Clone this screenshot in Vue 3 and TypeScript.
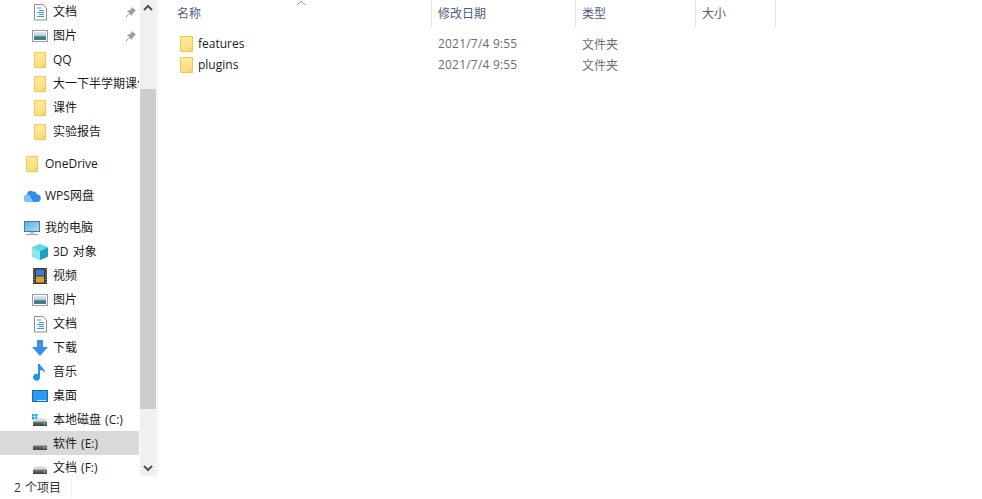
<script setup lang="ts">
type NavItem = { label: string; icon: string; indent: boolean; pin?: boolean; selected?: boolean };

const navGroups: NavItem[][] = [
  [
    { label: "文档", icon: "doc", indent: true, pin: true },
    { label: "图片", icon: "pic", indent: true, pin: true },
    { label: "QQ", icon: "folder", indent: true },
    { label: "大一下半学期课件", icon: "folder", indent: true },
    { label: "课件", icon: "folder", indent: true },
    { label: "实验报告", icon: "folder", indent: true },
  ],
  [{ label: "OneDrive", icon: "folder", indent: false }],
  [{ label: "WPS网盘", icon: "cloud", indent: false }],
  [
    { label: "我的电脑", icon: "pc", indent: false },
    { label: "3D 对象", icon: "cube", indent: true },
    { label: "视频", icon: "film", indent: true },
    { label: "图片", icon: "pic", indent: true },
    { label: "文档", icon: "doc", indent: true },
    { label: "下载", icon: "down", indent: true },
    { label: "音乐", icon: "music", indent: true },
    { label: "桌面", icon: "desk", indent: true },
    { label: "本地磁盘 (C:)", icon: "sys", indent: true },
    { label: "软件 (E:)", icon: "disk", indent: true, selected: true },
    { label: "文档 (F:)", icon: "disk", indent: true },
  ],
];

const columns = [
  { label: "名称", width: 274, sorted: true },
  { label: "修改日期", width: 144 },
  { label: "类型", width: 120 },
  { label: "大小", width: 80 },
];

const files = [
  { name: "features", date: "2021/7/4 9:55", type: "文件夹" },
  { name: "plugins", date: "2021/7/4 9:55", type: "文件夹" },
];
</script>

<template>
  <div class="window">
    <!-- shared gradients for the icons -->
    <svg class="defs" width="0" height="0">
      <defs>
        <linearGradient id="folderFill" x1="0" y1="0" x2="0" y2="1">
          <stop offset="0" stop-color="#fee99c" />
          <stop offset="1" stop-color="#fcdc7c" />
        </linearGradient>
        <linearGradient id="skyFill" x1="0" y1="0" x2="0" y2="1">
          <stop offset="0" stop-color="#e4eef5" />
          <stop offset="0.5" stop-color="#a9c6d8" />
          <stop offset="0.6" stop-color="#3f6f7c" />
          <stop offset="1" stop-color="#4b7f8d" />
        </linearGradient>
        <linearGradient id="screenFill" x1="0" y1="0" x2="1" y2="1">
          <stop offset="0" stop-color="#4fb4ea" />
          <stop offset="1" stop-color="#a6def7" />
        </linearGradient>
        <linearGradient id="driveFill" x1="0" y1="0" x2="0" y2="1">
          <stop offset="0" stop-color="#777b7e" />
          <stop offset="1" stop-color="#3f4245" />
        </linearGradient>
      </defs>
    </svg>

    <div class="main">
      <aside class="nav">
        <div class="nav-list">
          <div v-for="(group, g) in navGroups" :key="g" class="nav-group">
            <div
              v-for="item in group"
              :key="item.label + g"
              class="nav-row"
              :class="{ indent: item.indent, selected: item.selected }"
            >
              <svg class="nav-icon" viewBox="0 0 20 20">
                <template v-if="item.icon === 'folder'">
                  <path d="M2.500 3.500h11v15h-11z" fill="url(#folderFill)" stroke="#f0c94f" />
                  <path d="M11.500 18.500v-3h2" fill="none" stroke="#f0c94f" />
                </template>
                <template v-else-if="item.icon === 'doc'">
                  <path d="M2.500 3.500h8.500l3.500 3.500v12h-12z" fill="#fff" stroke="#8f8f8f" />
                  <path d="M5 7h4M7 9.500h5M5 11.500h7M7 13.500h5M5 15.500h7" stroke="#3b9bd9" fill="none" />
                </template>
                <template v-else-if="item.icon === 'pic'">
                  <rect x="0.500" y="5.500" width="15" height="11" fill="#fff" stroke="#9a9a9a" />
                  <rect x="2" y="7" width="12" height="8" fill="url(#skyFill)" />
                </template>
                <template v-else-if="item.icon === 'cloud'">
                  <path d="M0 14a3.500 3.500 0 0 1 3-4.500 3.500 3.500 0 0 1 5.500-3 4 4 0 0 1 4.500 3 3.500 3.500 0 0 1 0 7.500H3a3 3 0 0 1-3-3z" fill="#2f8fe8" />
                  <path d="M0 14a3.500 3.500 0 0 1 3-4.500c2 0 3 1 4 3l2 4.500H3a3 3 0 0 1-3-3z" fill="#7cc4f7" />
                </template>
                <template v-else-if="item.icon === 'pc'">
                  <rect x="0.500" y="4.500" width="15" height="10" fill="url(#screenFill)" stroke="#5f7382" />
                  <path d="M6 15h4v2H6z" fill="#c4ced6" />
                  <path d="M2 17.500h12" stroke="#8ea0ab" fill="none" />
                </template>
                <template v-else-if="item.icon === 'cube'">
                  <path d="M8 3l8 3.500v9L8 19l-8-3.500v-9z" fill="#3dc2d8" />
                  <path d="M0 6.500L8 10v9l-8-3.500z" fill="#8fe4ee" />
                  <path d="M8 10l8-3.500v9L8 19z" fill="#1c9fc0" />
                  <path d="M8 3l8 3.500L8 10 0 6.500z" fill="#62d5e6" />
                </template>
                <template v-else-if="item.icon === 'film'">
                  <rect x="1" y="3" width="14" height="16" fill="#3a3a3a" />
                  <path d="M2 4v14M14 4v14" stroke="#cfcfcf" stroke-dasharray="1 1.500" fill="none" />
                  <rect x="4" y="4.500" width="8" height="6" fill="#3f78d0" />
                  <rect x="4" y="11.500" width="8" height="6" fill="#d9a437" />
                </template>
                <template v-else-if="item.icon === 'down'">
                  <path d="M5 3h6v7h5l-8 9-8-9h5z" fill="#3b8fe0" />
                </template>
                <template v-else-if="item.icon === 'music'">
                  <path d="M6 3h2c0 3 5 4 5 9-1-2-3-3-5-3v7a3.500 3.500 0 1 1-2-3z" fill="#1f93e8" />
                </template>
                <template v-else-if="item.icon === 'desk'">
                  <rect x="0.500" y="5.500" width="15" height="11" fill="#2d9cf0" stroke="#0f6fbe" />
                  <path d="M5 15.500h9" stroke="#c7e6fb" />
                </template>
                <template v-else>
                  <path
                    v-if="item.icon === 'sys'"
                    d="M0 5h2.500v2.500H0zM3 5h2.500v2.500H3zM0 8h2.500v2.500H0zM3 8h2.500v2.500H3z"
                    fill="#1ea7ea"
                  />
                  <path d="M3 9.500h10l2 3H1z" fill="#d5d9dc" />
                  <rect x="1" y="12.500" width="14" height="4.500" fill="url(#driveFill)" />
                  <rect x="11.500" y="14" width="2" height="1.500" fill="#5fd06a" />
                </template>
              </svg>
              <span class="nav-label">{{ item.label }}</span>
              <svg v-if="item.pin" class="pin" viewBox="0 0 12 12">
                <path d="M7 1l4 4-1.500.5L7.500 8l-.5 2-5-5 2-.5 2.500-2z" fill="#9a9ea3" />
                <path d="M3.500 8.500L1 11" stroke="#9a9ea3" fill="none" />
              </svg>
            </div>
          </div>
        </div>
        <div class="scrollbar">
          <svg class="arrow" viewBox="0 0 16 17">
            <path d="M4 10l4-4 4 4" fill="none" stroke="#505050" stroke-width="2" />
          </svg>
          <div class="track"><div class="thumb" /></div>
          <svg class="arrow" viewBox="0 0 16 17">
            <path d="M4 7l4 4 4-4" fill="none" stroke="#505050" stroke-width="2" />
          </svg>
        </div>
      </aside>

      <section class="content">
        <div class="header">
          <div
            v-for="col in columns"
            :key="col.label"
            class="col"
            :style="{ width: col.width + 'px' }"
          >
            <svg v-if="col.sorted" class="sort" viewBox="0 0 10 5">
              <path d="M1 5l4-4 4 4" fill="none" stroke="#9a9a9a" />
            </svg>
            {{ col.label }}
          </div>
        </div>
        <div class="rows">
          <div v-for="file in files" :key="file.name" class="row">
            <div class="cell-name">
              <svg class="file-icon" viewBox="0 0 13 16">
                <path d="M.5.5h12v15H.5z" fill="url(#folderFill)" stroke="#f0c94f" />
                <path d="M10.500 15.500v-3h2" fill="none" stroke="#f0c94f" />
              </svg>
              <span>{{ file.name }}</span>
            </div>
            <div class="cell-date">{{ file.date }}</div>
            <div class="cell-type">{{ file.type }}</div>
          </div>
        </div>
      </section>
    </div>

    <footer class="status">
      <span class="count">2 个项目</span>
    </footer>
  </div>
</template>

<style scoped>
* {
  box-sizing: border-box;
}

.window {
  width: 982px;
  height: 499px;
  display: flex;
  flex-direction: column;
  overflow: hidden;
  background: #fff;
  font-family: "Open Sans", "Noto Sans CJK SC", sans-serif;
  font-size: 12px;
}

.defs {
  display: block;
  height: 0;
}

.main {
  display: flex;
  height: 476px;
}

.nav {
  display: flex;
  width: 158px;
  border-right: 1px solid #f0f0f0;
}

.nav-list {
  width: 139px;
  margin-top: -1px;
  margin-right: 1px;
  overflow: hidden;
  display: flex;
  flex-direction: column;
  gap: 8px;
}

.nav-row {
  position: relative;
  display: flex;
  align-items: center;
  height: 24px;
  padding-left: 24px;
  color: #1a1a1a;
  white-space: nowrap;
  word-spacing: 1px;
}

.nav-row.indent {
  padding-left: 32px;
}

.nav-row.selected {
  background: #d9d9d9;
}

.nav-icon {
  width: 20px;
  height: 20px;
  flex: none;
  margin-right: 1px;
}

.nav-label {
  overflow: hidden;
}

.pin {
  position: absolute;
  right: 2px;
  top: 7px;
  width: 12px;
  height: 12px;
}

.scrollbar {
  width: 16px;
  background: #f0f0f0;
  display: flex;
  flex-direction: column;
}

.arrow {
  width: 16px;
  height: 17px;
  flex: none;
}

.track {
  flex: 1;
  padding-top: 72px;
}

.thumb {
  height: 320px;
  background: #cdcdcd;
}

.content {
  flex: 1;
}

.header {
  display: flex;
  height: 27px;
}

.col {
  position: relative;
  height: 27px;
  line-height: 28px;
  padding-left: 6px;
  color: #4c607a;
  border-right: 1px solid #e5e5e5;
}

.col:first-child {
  padding-left: 19px;
}

.sort {
  position: absolute;
  left: 138px;
  top: 0;
  width: 10px;
  height: 5px;
}

.rows {
  padding-top: 6px;
}

.row {
  display: flex;
  height: 21px;
  align-items: center;
  color: #6d6d6d;
}

.cell-name {
  display: flex;
  align-items: center;
  gap: 5px;
  width: 274px;
  padding-left: 22px;
  color: #1a1a1a;
}

.file-icon {
  width: 13px;
  height: 16px;
}

.cell-date {
  width: 144px;
  padding-left: 6px;
  letter-spacing: 0.2px;
}

.cell-type {
  padding-left: 6px;
}

.status {
  height: 23px;
  display: flex;
  align-items: center;
  color: #333;
  word-spacing: 1px;
}

.count {
  padding-left: 14px;
  padding-right: 10px;
  border-right: 1px solid #f0f0f0;
  line-height: 20px;
}
</style>
